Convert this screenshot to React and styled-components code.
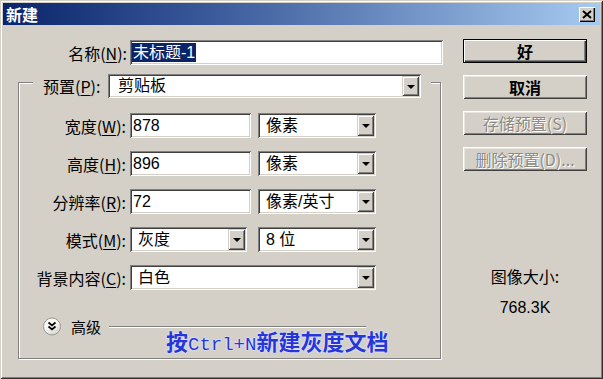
import React from "react";
import styled, { createGlobalStyle } from "styled-components";

const Global = createGlobalStyle`
  html, body { margin: 0; padding: 0; background: #d4d0c8; }
  body { font-family: "Liberation Sans", "Noto Sans CJK SC", sans-serif; font-size: 16px; color: #000; }
`;

const Window = styled.div`
  width: 603px;
  height: 379px;
  box-sizing: border-box;
  padding: 3px;
  background: #d4d0c8;
  box-shadow: inset 1px 1px 0 #d4d0c8, inset -1px -1px 0 #303030,
    inset 2px 2px 0 #ffffff, inset -2px -2px 0 #808080;
  display: flex;
  flex-direction: column;
`;

const TitleBar = styled.div`
  height: 22px;
  flex: none;
  display: flex;
  align-items: center;
  justify-content: space-between;
  padding: 0 5px 0 3px;
  background: linear-gradient(to right, #0a246a 0%, #3a5a9a 35%, #a6caf0 100%);
`;

const Title = styled.span`
  color: #fff;
  font-weight: 700;
  font-size: 16px;
  line-height: 22px;
  font-family: "Noto Sans CJK SC", sans-serif;
`;

const CloseButton = styled.div`
  width: 16px;
  height: 15px;
  background: #d4d0c8;
  box-shadow: inset 1px 1px 0 #fff, inset -1px -1px 0 #000, inset -2px -2px 0 #808080;
  display: flex;
  align-items: center;
  justify-content: center;
`;

const Body = styled.div`
  display: flex;
  padding-top: 14px;
`;

const LeftCol = styled.div`
  width: 442px;
  flex: none;
  display: flex;
  flex-direction: column;
`;

const NameRow = styled.div`
  display: flex;
  align-items: center;
  margin-top: 1px;
  gap: 3px;
`;

const Label = styled.div`
  width: ${(p) => p.$w || 124}px;
  flex: none;
  text-align: right;
  white-space: nowrap;
  font-family: "Noto Sans CJK SC", sans-serif;
  font-size: 16px;
  line-height: 20px;
  padding-right: ${(p) => p.$pr || 0}px;
  box-sizing: border-box;
  u { text-decoration: underline; text-underline-offset: 2px; }
`;

const Sunken = styled.div`
  width: ${(p) => p.$w}px;
  height: ${(p) => p.$h || 25}px;
  box-sizing: border-box;
  padding: 2px;
  background: #fff;
  box-shadow: inset 1px 1px 0 #808080, inset -1px -1px 0 #ffffff,
    inset 2px 2px 0 #404040, inset -2px -2px 0 #d4d0c8;
  display: flex;
  align-items: center;
  flex: none;
`;

const InputText = styled.span`
  padding-left: 1px;
  font-size: 16px;
  line-height: 19px;
  white-space: nowrap;
`;

const Selected = styled.span`
  background: #0a246a;
  color: #fff;
  font-size: 16px;
  line-height: 19px;
  padding: 0 1px;
`;

const ComboText = styled.span`
  flex: 1;
  padding-left: ${(p) => p.$pl || 6}px;
  font-size: 16px;
  line-height: 20px;
  white-space: nowrap;
`;

const DropBtn = styled.div`
  width: 17px;
  align-self: stretch;
  flex: none;
  background: #d4d0c8;
  box-shadow: inset 1px 1px 0 #d4d0c8, inset -1px -1px 0 #404040,
    inset 2px 2px 0 #ffffff, inset -2px -2px 0 #808080;
  display: flex;
  align-items: center;
  justify-content: center;
  &::after {
    content: "";
    width: 0;
    height: 0;
    border-left: 4px solid transparent;
    border-right: 4px solid transparent;
    border-top: 4px solid #000;
    margin-top: 1px;
  }
`;

const GroupBox = styled.div`
  position: relative;
  margin: 17px 0 0 15px;
  width: 423px;
  height: 277px;
  box-sizing: border-box;
  border: 1px solid #808080;
  box-shadow: inset 1px 1px 0 #fff, 1px 1px 0 #fff;
  display: flex;
  flex-direction: column;
  align-items: flex-start;
`;

const PresetRow = styled.div`
  margin: -9px 0 0 14px;
  padding: 0 10px;
  background: #d4d0c8;
  display: flex;
  align-items: center;
  gap: 8px;
`;

const FieldGrid = styled.div`
  margin-top: 15px;
  display: grid;
  grid-template-columns: 111px 128px 118px;
  grid-auto-rows: 25px;
  row-gap: 13px;
  align-items: center;
`;

const Span2 = styled.div`
  grid-column: 2 / 4;
`;

const Advanced = styled.div`
  margin-top: 27px;
  padding-left: 23px;
  display: flex;
  align-items: center;
  width: 100%;
  box-sizing: border-box;
`;

const AdvText = styled.span`
  margin-left: 9px;
  font-family: "Noto Sans CJK SC", sans-serif;
  font-size: 15px;
  line-height: 18px;
`;

const Etched = styled.div`
  margin-left: 8px;
  width: 257px;
  height: 1px;
  background: #808080;
  box-shadow: 0 1px 0 #fff;
`;

const Note = styled.div`
  position: absolute;
  left: 147px;
  top: 243px;
  color: #2636d8;
  font-weight: 700;
  font-size: 22px;
  line-height: 28px;
  white-space: nowrap;
  font-family: "Noto Sans CJK SC", sans-serif;
  text-shadow: 0 0 2px #e8ecff, 0 0 1px #ffffff, 0 0 3px #c8d0ff;
`;

const Mono = styled.span`
  font-family: "Liberation Mono", monospace;
  font-weight: 400;
  font-size: 19px;
`;

const RightCol = styled.div`
  margin-left: 18px;
  width: 124px;
  display: flex;
  flex-direction: column;
  gap: 12px;
`;

const Button = styled.div`
  height: 24px;
  box-sizing: border-box;
  display: flex;
  align-items: center;
  justify-content: center;
  font-family: "Noto Sans CJK SC", sans-serif;
  font-size: 16px;
  font-weight: ${(p) => (p.$disabled ? 400 : 700)};
  color: ${(p) => (p.$disabled ? "#8c8a84" : "#000")};
  text-shadow: ${(p) => (p.$disabled ? "1px 1px 0 #fff" : "none")};
  background: #d4d0c8;
  border: ${(p) => (p.$default ? "1px solid #000" : "none")};
  box-shadow: ${(p) =>
    p.$default
      ? "inset 1px 1px 0 #fff, inset -1px -1px 0 #404040, inset -2px -2px 0 #808080"
      : "inset 1px 1px 0 #fff, inset -1px -1px 0 #404040, inset 2px 2px 0 #e8e6e0, inset -2px -2px 0 #808080"};
`;

const Info = styled.div`
  margin-top: 84px;
  display: flex;
  flex-direction: column;
  align-items: center;
  gap: 14px;
  font-size: 16px;
  line-height: 18px;
`;

const InfoLabel = styled.span`
  font-family: "Noto Sans CJK SC", sans-serif;
`;

function Combo({ w, h, pl, children }) {
  return (
    <Sunken $w={w} $h={h}>
      <ComboText $pl={pl}>{children}</ComboText>
      <DropBtn />
    </Sunken>
  );
}

function Input({ w, children }) {
  return (
    <Sunken $w={w}>
      <InputText>{children}</InputText>
    </Sunken>
  );
}

function ChevronIcon() {
  return (
    <svg width="20" height="19" viewBox="0 0 20 19">
      <defs>
        <linearGradient id="cg" x1="0" y1="0" x2="0.6" y2="1">
          <stop offset="0%" stopColor="#ffffff" />
          <stop offset="60%" stopColor="#f4f3ef" />
          <stop offset="100%" stopColor="#d8d6d0" />
        </linearGradient>
      </defs>
      <circle cx="10" cy="9.5" r="8.5" fill="url(#cg)" stroke="#9a9892" strokeWidth="1" />
      <path d="M6.5 5.5 L10 8.5 L13.5 5.5" fill="none" stroke="#000" strokeWidth="1.7" />
      <path d="M6.5 9.5 L10 12.5 L13.5 9.5" fill="none" stroke="#000" strokeWidth="1.7" />
    </svg>
  );
}

export default function App() {
  return (
    <>
      <Global />
      <Window>
        <TitleBar>
          <Title>新建</Title>
          <CloseButton>
            <svg width="10" height="9" viewBox="0 0 10 9">
              <path d="M1 1 L9 8 M9 1 L1 8" stroke="#000" strokeWidth="2" />
            </svg>
          </CloseButton>
        </TitleBar>
        <Body>
          <LeftCol>
            <NameRow>
              <Label>
                名称(<u>N</u>):
              </Label>
              <Sunken $w={313}>
                <Selected>未标题-1</Selected>
              </Sunken>
            </NameRow>
            <GroupBox>
              <PresetRow>
                <Label $w={57}>
                  预置(<u>P</u>):
                </Label>
                <Combo w={313} h={24} pl={8}>剪贴板</Combo>
              </PresetRow>
              <FieldGrid>
                <Label $w={111} $pr={4}>
                  宽度(<u>W</u>):
                </Label>
                <Input w={121}>878</Input>
                <Combo w={118}>像素</Combo>

                <Label $w={111} $pr={4}>
                  高度(<u>H</u>):
                </Label>
                <Input w={121}>896</Input>
                <Combo w={118}>像素</Combo>

                <Label $w={111} $pr={4}>
                  分辨率(<u>R</u>):
                </Label>
                <Input w={121}>72</Input>
                <Combo w={118}>像素/英寸</Combo>

                <Label $w={111} $pr={4}>
                  模式(<u>M</u>):
                </Label>
                <Combo w={117} pl={6}>灰度</Combo>
                <Combo w={118}>8 位</Combo>

                <Label $w={111} $pr={4}>
                  背景内容(<u>C</u>):
                </Label>
                <Span2>
                  <Combo w={246}>白色</Combo>
                </Span2>
              </FieldGrid>
              <Advanced>
                <ChevronIcon />
                <AdvText>高级</AdvText>
                <Etched />
              </Advanced>
              <Note>
                按<Mono>Ctrl+N</Mono>新建灰度文档
              </Note>
            </GroupBox>
          </LeftCol>
          <RightCol>
            <Button $default>好</Button>
            <Button>取消</Button>
            <Button $disabled>存储预置(S)</Button>
            <Button $disabled>删除预置(D)...</Button>
            <Info>
              <InfoLabel>图像大小:</InfoLabel>
              <span>768.3K</span>
            </Info>
          </RightCol>
        </Body>
      </Window>
    </>
  );
}
